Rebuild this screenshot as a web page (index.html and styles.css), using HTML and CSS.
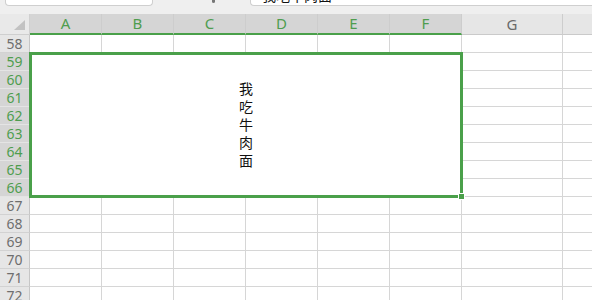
FILE: index.html
```html
<!DOCTYPE html>
<html>
<head>
<meta charset="utf-8">
<link rel="stylesheet" href="styles.css">
</head>
<body>
<div class="topbar">
  <div class="namebox"></div>
  <div class="fxmark"></div>
  <div class="formula"><span class="ftext">我吃牛肉面</span></div>
</div>
<div class="sheet">
  <div class="corner"><span class="tri"></span></div>
  <div class="ch sel">A</div><div class="ch sel">B</div><div class="ch sel">C</div><div class="ch sel">D</div><div class="ch sel">E</div><div class="ch sel">F</div><div class="ch">G</div><div class="ch last"></div>

  <div class="rh">58</div><div class="c"></div><div class="c"></div><div class="c"></div><div class="c"></div><div class="c"></div><div class="c"></div><div class="c"></div><div class="c last"></div>

  <div class="rh sel">59</div><div class="c"></div><div class="c last"></div>
  <div class="rh sel">60</div><div class="c"></div><div class="c last"></div>
  <div class="rh sel">61</div><div class="c"></div><div class="c last"></div>
  <div class="rh sel">62</div><div class="c"></div><div class="c last"></div>
  <div class="rh sel">63</div><div class="c"></div><div class="c last"></div>
  <div class="rh sel">64</div><div class="c"></div><div class="c last"></div>
  <div class="rh sel">65</div><div class="c"></div><div class="c last"></div>
  <div class="rh sel">66</div><div class="c"></div><div class="c last"></div>

  <div class="rh">67</div><div class="c"></div><div class="c"></div><div class="c"></div><div class="c"></div><div class="c"></div><div class="c"></div><div class="c"></div><div class="c last"></div>
  <div class="rh">68</div><div class="c"></div><div class="c"></div><div class="c"></div><div class="c"></div><div class="c"></div><div class="c"></div><div class="c"></div><div class="c last"></div>
  <div class="rh">69</div><div class="c"></div><div class="c"></div><div class="c"></div><div class="c"></div><div class="c"></div><div class="c"></div><div class="c"></div><div class="c last"></div>
  <div class="rh">70</div><div class="c"></div><div class="c"></div><div class="c"></div><div class="c"></div><div class="c"></div><div class="c"></div><div class="c"></div><div class="c last"></div>
  <div class="rh">71</div><div class="c"></div><div class="c"></div><div class="c"></div><div class="c"></div><div class="c"></div><div class="c"></div><div class="c"></div><div class="c last"></div>
  <div class="rh">72</div><div class="c"></div><div class="c"></div><div class="c"></div><div class="c"></div><div class="c"></div><div class="c"></div><div class="c"></div><div class="c last"></div>

  <div class="merged"><span class="stack">我吃牛肉面</span><span class="handle"></span></div>
</div>
</body>
</html>
```
FILE: styles.css
```css
* { box-sizing: border-box; }
html, body { margin: 0; padding: 0; background: #fff; overflow: hidden; }
body { width: 592px; height: 300px; font-family: "Noto Sans", "Open Sans", sans-serif; }

.topbar {
  height: 14px;
  background: #efefef;
  display: flex;
  align-items: flex-start;
  position: relative;
  overflow: hidden;
}
.namebox {
  margin-left: 5px;
  width: 148px;
  height: 6px;
  background: #fff;
  border: 1px solid #cfcfcf;
  border-top: none;
  border-radius: 0 0 4px 4px;
}
.fxmark {
  margin-left: 59px;
  width: 3px;
  height: 3px;
  background: #777;
  border-radius: 0 0 2px 2px;
}
.formula {
  margin-left: 35px;
  flex: 1;
  height: 6px;
  background: #fff;
  border: 1px solid #cfcfcf;
  border-top: none;
  border-right: none;
  border-radius: 0 0 0 4px;
  overflow: hidden;
  padding-left: 11px;
}
.ftext {
  display: block;
  font-family: "Noto Sans CJK SC", sans-serif;
  font-size: 14px;
  line-height: 14px;
  margin-top: -12px;
  color: #111;
}

.sheet {
  display: grid;
  grid-template-columns: 30px repeat(6, 72px) 101px 1fr;
  grid-template-rows: 21px;
  grid-auto-rows: 18px;
  position: relative;
}

.corner {
  background: #e9e9e9;
  border-right: 1px solid #d0d0d0;
  border-bottom: 1px solid #cfcfcf;
  position: relative;
}
.tri {
  position: absolute;
  right: 4px;
  bottom: 4px;
  width: 0;
  height: 0;
  border-left: 11px solid transparent;
  border-bottom: 10px solid #c2c2c2;
}

.ch {
  background: #e6e6e6;
  color: #6a6a6a;
  border-right: 1px solid #cdcdcd;
  border-bottom: 1px solid #cacaca;
  font-size: 15px;
  line-height: 20px;
  text-align: center;
}
.ch.sel {
  background: #d5d5d5;
  color: #4f9d4f;
  border-bottom: 2px solid #4aa04a;
  line-height: 19px;
}
.ch.last { border-right: none; }

.rh {
  background: #e6e6e6;
  color: #6e6e6e;
  border-right: 1px solid #c6c6c6;
  border-bottom: 1px solid #d2d2d2;
  font-size: 14px;
  line-height: 17px;
  text-align: center;
}
.rh.sel {
  background: #d5d5d5;
  color: #4f9d4f;
  border-bottom: 1px solid #e4e4e4;
}

.c {
  border-right: 1px solid #d6d6d6;
  border-bottom: 1px solid #d6d6d6;
}
.c.last { border-right: none; }

.merged {
  grid-column: 2 / 8;
  grid-row: 3 / 11;
  margin: -1px;
  border: 3px solid #4aa04a;
  background: #fff;
  position: relative;
  z-index: 1;
  display: flex;
  align-items: center;
  justify-content: center;
}
.stack {
  display: block;
  width: 14px;
  font-family: "Noto Sans CJK SC", sans-serif;
  font-size: 14px;
  line-height: 18px;
  color: #111;
  text-align: center;
  word-break: break-all;
  margin-top: -2px;
}
.handle {
  position: absolute;
  right: -5px;
  bottom: -5px;
  width: 7px;
  height: 7px;
  background: #4aa04a;
  border: 1px solid #fff;
}
```
